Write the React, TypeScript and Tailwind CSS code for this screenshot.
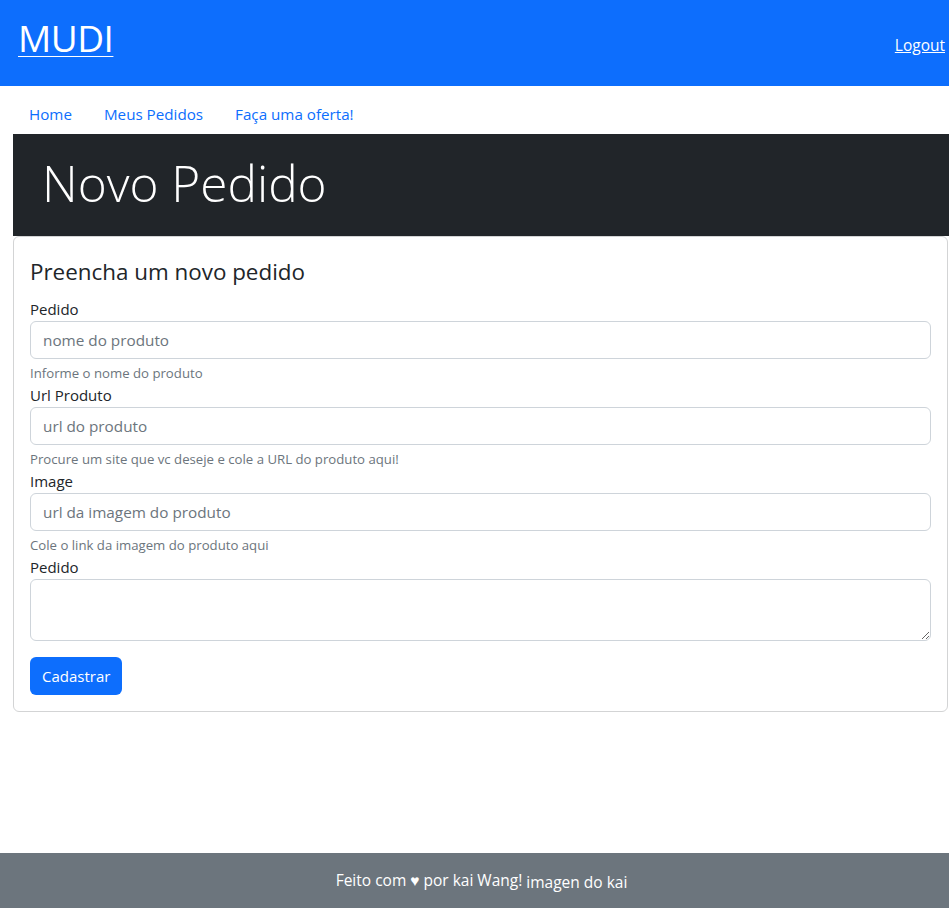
import React from "react";

const fields = [
  { label: "Pedido", placeholder: "nome do produto", help: "Informe o nome do produto" },
  { label: "Url Produto", placeholder: "url do produto", help: "Procure um site que vc deseje e cole a URL do produto aqui!" },
  { label: "Image", placeholder: "url da imagem do produto", help: "Cole o link da imagem do produto aqui" },
];

const App: React.FC = () => {
  return (
    <div className="min-h-screen flex flex-col bg-white text-[#212529] font-['Open_Sans',sans-serif]">
      {/* Header */}
      <header className="h-[86px] bg-[#0d6efd] flex items-baseline justify-between pl-[18px] pr-[4px] pt-[14px]">
        <a href="#" className="text-[37px] leading-[48px] text-white underline underline-offset-[4px] decoration-1 tracking-[-0.5px]">
          MUDI
        </a>
        <a href="#" className="text-[15.5px] text-white underline relative -top-[1px]">
          Logout
        </a>
      </header>

      <div className="ml-[13px]">
        {/* Nav */}
        <nav className="flex h-[48px] items-center pt-[9px]">
          {["Home", "Meus Pedidos", "Faça uma oferta!"].map((item) => (
            <a key={item} href="#" className="px-4 text-[15.2px] text-[#0d6efd]">
              {item}
            </a>
          ))}
        </nav>

        {/* Jumbotron */}
        <div className="bg-[#212529] h-[102px] flex items-center pl-[29px]">
          <h1 className="text-[49.5px] font-light text-white leading-none pb-[2px]">Novo Pedido</h1>
        </div>

        {/* Card */}
        <div className="border border-[#d3d4d5] rounded-[6px] mr-[1px]">
          <div className="p-4">
            <h4 className="text-[22.4px] leading-[29px] mt-[4px] mb-[11px]">Preencha um novo pedido</h4>
            <form>
              {fields.map((f) => (
                <div key={f.label}>
                  <label className="block text-[15px] leading-[24px]">{f.label}</label>
                  <input
                    type="text"
                    placeholder={f.placeholder}
                    className="w-full h-[38px] border border-[#ced4da] rounded-[6px] px-3 text-[15.3px] placeholder:text-[#6c757d] outline-none"
                  />
                  <div className="mt-1 text-[13.2px] leading-[20px] text-[#6c757d]">{f.help}</div>
                </div>
              ))}
              <div>
                <label className="block text-[15px] leading-[24px]">Pedido</label>
                <textarea className="block w-full h-[62px] border border-[#ced4da] rounded-[6px] px-3 py-1.5 text-[15px] outline-none resize-y" />
              </div>
              <button
                type="button"
                className="mt-4 h-[38px] px-3 bg-[#0d6efd] text-white text-[15px] rounded-[6px]"
              >
                Cadastrar
              </button>
            </form>
          </div>
        </div>
      </div>

      {/* Footer */}
      <footer className="mt-auto h-[55px] bg-[#6c757d] flex items-center justify-center pl-[14px] text-white text-[15.5px]">
        <span>Feito com ♥ por kai Wang!</span>
        <span className="ml-1 relative top-[2px]">imagen do kai</span>
      </footer>
    </div>
  );
};

export default App;
